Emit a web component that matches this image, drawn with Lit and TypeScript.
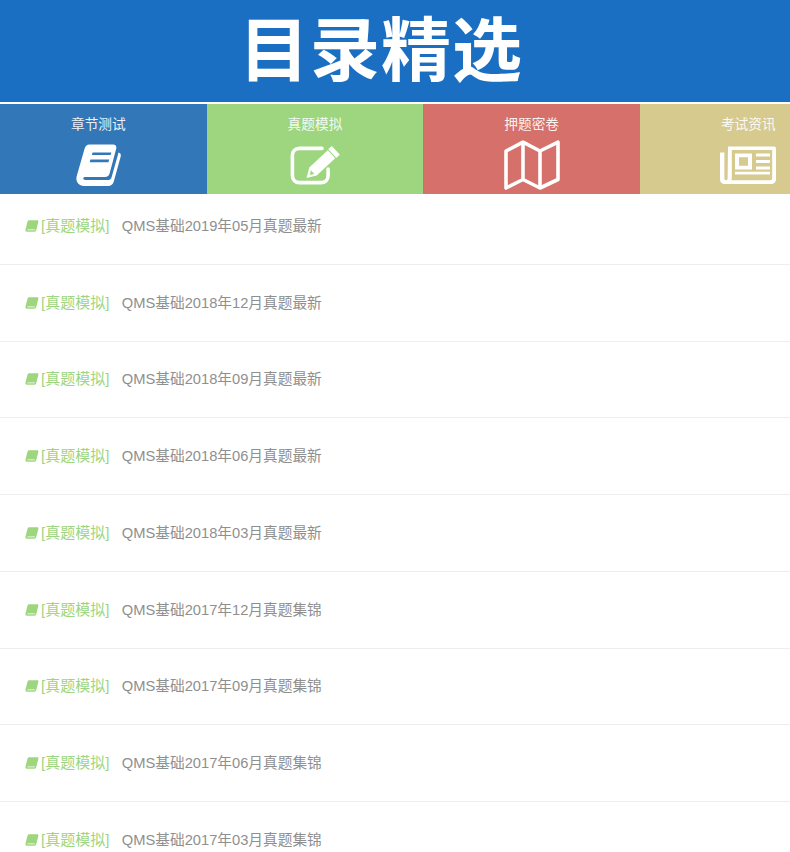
import { LitElement, html, css } from "lit";
import { customElement } from "lit/decorators.js";

const book = html`<svg class="ic book" viewBox="0 0 45 42" aria-hidden="true">
  <path fill="currentColor" fill-rule="evenodd" d="M13.5 .6H37C39.6 .6 40.8 2.4 40.2 4.8L33.6 29.5C33 31.8 31.5 33 29 33H9.6C8 33 7.2 33.7 7.2 34.6 7.2 35.5 8 36 9.6 36H32.5C34 36 35 35 35.5 33.5L42 10.6 42.5 8.4C44.5 8.8 45.2 10.6 44.7 12.5L37.8 37.5C37 40.3 35 42 32 42H8C3 42 .4 38.6 .4 34.6.4 33 .8 31.5 1.3 30L8.5 5C9.3 2.4 10.8.6 13.5.6ZM16.6 8.4 15.9 11H34.6L35.4 8.4ZM14.4 15.6 13.7 18.2H32.4L33.2 15.6Z"/>
</svg>`;

const miniBook = html`<svg class="ic mini" viewBox="0 0 15 13" aria-hidden="true">
  <path fill="currentColor" fill-rule="evenodd" d="M4.5 .3H13.2C14.2 .3 14.6 1 14.4 1.8L12.2 10.6C12 11.8 11.2 12.7 10 12.7H2C.8 12.7 .2 11.8 .4 10.6L2.6 2C2.9 .9 3.5 .3 4.5 .3ZM2.6 10.2 2.4 11H10.6L10.8 10.2Z"/>
</svg>`;

const TABS = [
  { name: "章节测试", cls: "blue", icon: book },
  {
    name: "真题模拟",
    cls: "green",
    icon: html`<svg class="ic edit" viewBox="0 0 50 40" aria-hidden="true">
      <path fill="none" stroke="currentColor" stroke-width="3.6" stroke-linecap="round" d="M32 3.4H9.5C5.3 3.4 2.4 6.3 2.4 10.5V30.5C2.4 34.7 5.3 37.6 9.5 37.6H31C35.2 37.6 38.1 34.7 38.1 30.5V24"/>
      <path fill="currentColor" stroke="currentColor" stroke-width="1.2" stroke-linejoin="round" d="M41.8 1.8 49 9.6 46.4 12.2 39 4.2Z"/>
      <path fill="currentColor" fill-rule="evenodd" d="M37.8 5.2 45.2 13.2 26.7 30.5 16.5 33 19.3 22.5ZM20.9 25.3 19.9 30 24.4 29Z"/>
    </svg>`,
  },
  {
    name: "押题密卷",
    cls: "red",
    icon: html`<svg class="ic map" viewBox="0 0 56 50" aria-hidden="true">
      <path fill="none" stroke="currentColor" stroke-width="3.6" stroke-linejoin="round" d="M2 11 19 2.2 36 11 54 2.2V39.5L36 48 19 39.5 2 48ZM19 2.2V39.5M36 11V48"/>
    </svg>`,
  },
  {
    name: "考试资讯",
    cls: "tan",
    icon: html`<svg class="ic news" viewBox="0 0 56 38" aria-hidden="true">
      <path fill="currentColor" fill-rule="evenodd" d="M8 .5H54C55.2 .5 56 1.3 56 2.5V33C56 36 54 38 51 38H5C2 38 0 36 0 33V6.5H4.4V32.5C4.4 33.5 5 34.2 6 34.2 7 34.2 7.6 33.5 7.6 32.5ZM11.8 4V31.5C11.8 32.5 11.6 33.4 11.3 34.2H50.5C51.5 34.2 52.2 33.5 52.2 32.5V4ZM15 7.5H32V23.5H15ZM19 11.3V19.7H28V11.3ZM36 7.5H50V10.6H36ZM36 14H50V17.1H36ZM36 20.4H50V23.5H36ZM15 25.8H50V28.6H15Z"/>
    </svg>`,
  },
];

const ROWS = [
  "QMS基础2019年05月真题最新",
  "QMS基础2018年12月真题最新",
  "QMS基础2018年09月真题最新",
  "QMS基础2018年06月真题最新",
  "QMS基础2018年03月真题最新",
  "QMS基础2017年12月真题集锦",
  "QMS基础2017年09月真题集锦",
  "QMS基础2017年06月真题集锦",
  "QMS基础2017年03月真题集锦",
];

@customElement("app-root")
export class AppRoot extends LitElement {
  static styles = css`
    :host {
      display: block;
      width: 790px;
      height: 852px;
      overflow: hidden;
      background: #fff;
      font-family: "Liberation Sans", "Noto Sans CJK SC", sans-serif;
    }
    .banner {
      height: 102px;
      background: #1a6fc2;
      color: #fff;
      display: flex;
      align-items: center;
      justify-content: center;
      box-sizing: border-box;
      padding: 0 28px 10px 0;
      font: 700 70px/80px "Noto Sans CJK SC", sans-serif;
      letter-spacing: 1px;
    }
    .tabs {
      display: grid;
      grid-template-columns: repeat(4, 216.67px);
      width: 867px;
      height: 90px;
      margin: 2.4px 0 0 -10px;
      color: #fff;
    }
    .tab {
      display: flex;
      flex-direction: column;
      align-items: center;
      overflow: hidden;
    }
    .blue { background: #3277b8; }
    .green { background: #9dd67f; }
    .red { background: #d6706a; }
    .tan { background: #d6ca8e; }
    .name {
      font: 13.7px/16px "Noto Sans CJK SC", sans-serif;
      margin-top: 11px;
      opacity: 0.9;
    }
    .slot {
      height: 50px;
      margin-top: 9px;
      display: flex;
      align-items: center;
      justify-content: center;
    }
    .ic { display: block; }
    .ic.book { width: 45px; height: 42px; }
    .ic.edit { width: 50px; height: 40px; }
    .ic.map { width: 56px; height: 50px; }
    .ic.news { width: 56px; height: 38px; }
    .list {
      display: flex;
      flex-direction: column;
    }
    .row {
      flex: none;
      height: 76.7px;
      box-sizing: border-box;
      display: flex;
      align-items: flex-end;
      padding: 0 0 28px 25px;
      border-bottom: 1px solid #eeeeee;
      font-size: 14.7px;
      line-height: 20px;
      color: #8f8f8f;
    }
    .row:first-child { height: 70.7px; }
    .tag {
      display: flex;
      align-items: center;
      font-size: 15px;
      color: #9dd67f;
      margin-right: 12.5px;
    }
    .ic.mini { width: 14px; height: 12px; margin-right: 2px; }
  `;

  render() {
    return html`
      <div class="banner">目录精选</div>
      <div class="tabs">
        ${TABS.map(
          (t) => html`<div class="tab ${t.cls}">
            <div class="name">${t.name}</div>
            <div class="slot">${t.icon}</div>
          </div>`
        )}
      </div>
      <div class="list">
        ${ROWS.map(
          (r) => html`<div class="row">
            <span class="tag">${miniBook}[真题模拟]</span><span>${r}</span>
          </div>`
        )}
      </div>
    `;
  }
}
